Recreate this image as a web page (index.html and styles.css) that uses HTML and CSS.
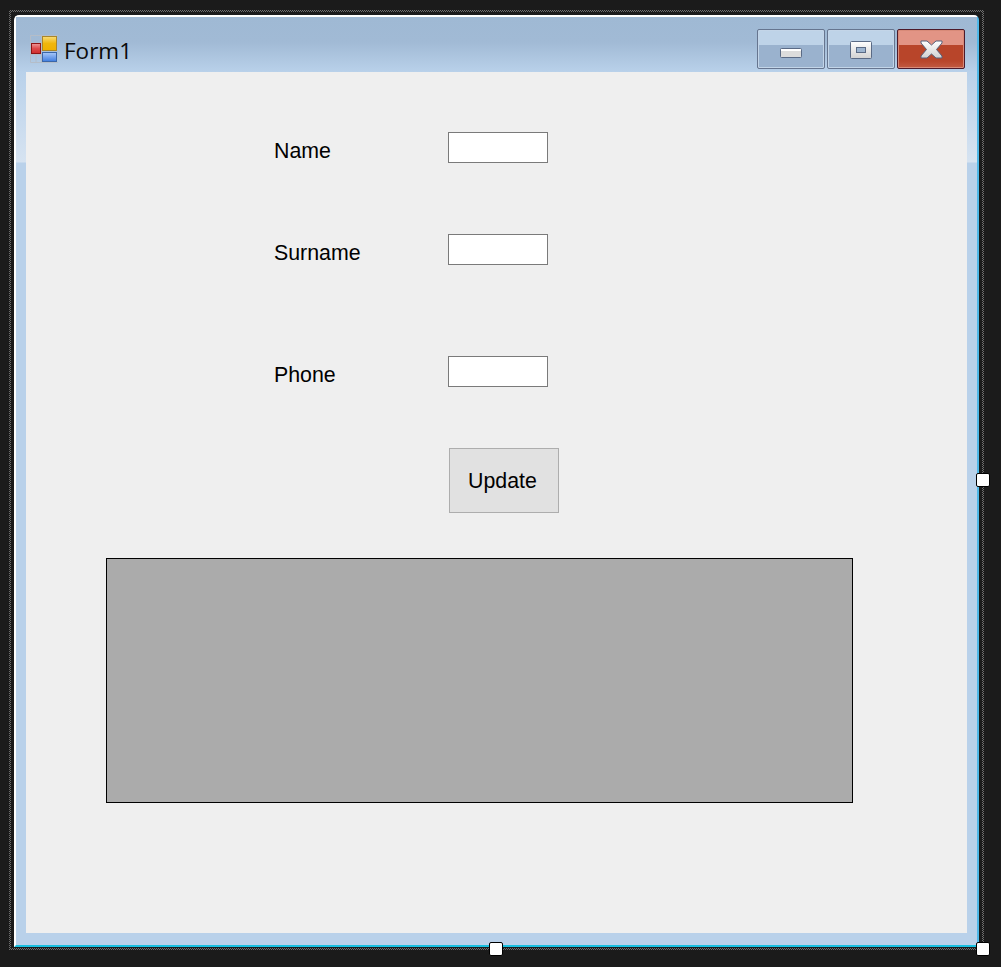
FILE: index.html
```html
<!DOCTYPE html>
<html lang="en">
<head>
<meta charset="utf-8">
<title>Form1</title>
<link rel="stylesheet" href="styles.css">
</head>
<body>
<div class="designer">
  <div class="selection">
    <div class="selection-gap">
      <div class="window">
        <div class="caption">
          <svg class="app-icon" width="29" height="28" viewBox="0 0 29 28">
            <path d="M.5 .5H28M.5 8H12M.5 19.500H12M.5 27.500H28M.5 .5V27.500M6 19.500V27.500M11.500 .5V27.500" fill="none" stroke="#b4bdc8" stroke-width="1"/>
            <defs>
              <linearGradient id="g-red" x1="0" y1="0" x2="0" y2="1"><stop offset="0" stop-color="#ee9a9a"/><stop offset=".5" stop-color="#dd4a4a"/><stop offset="1" stop-color="#d02c2c"/></linearGradient>
              <linearGradient id="g-yellow" x1="0" y1="0" x2="0" y2="1"><stop offset="0" stop-color="#f9dc78"/><stop offset=".5" stop-color="#f0b60c"/><stop offset="1" stop-color="#efb000"/></linearGradient>
              <linearGradient id="g-blue" x1="0" y1="0" x2="0" y2="1"><stop offset="0" stop-color="#a9c8f8"/><stop offset="1" stop-color="#3f7de0"/></linearGradient>
            </defs>
            <rect x="1.500" y="8.500" width="9" height="10" fill="url(#g-red)" stroke="#8f1414"/>
            <rect x="12.500" y="1.500" width="14" height="14" fill="url(#g-yellow)" stroke="#a9862a"/>
            <rect x="12.500" y="17.500" width="14" height="9" fill="url(#g-blue)" stroke="#3a66a8"/>
          </svg>
          <span class="title">Form1</span>
          <div class="caption-buttons">
            <div class="cap-btn">
              <svg width="22" height="10" viewBox="0 0 22 10"><rect x=".5" y=".5" width="21" height="9" rx="1" fill="#dcdcdc" stroke="#5a6a85"/><rect x="1" y="1" width="20" height="2" fill="#fff"/></svg>
            </div>
            <div class="cap-btn">
              <svg class="icon-max" width="22" height="18" viewBox="0 0 22 18"><defs><linearGradient id="g-max" x1="0" y1="0" x2="0" y2="1"><stop offset="0" stop-color="#fff"/><stop offset="1" stop-color="#d2d2d2"/></linearGradient></defs><rect x=".5" y=".5" width="21" height="17" rx="1" fill="url(#g-max)" stroke="#5a6a85"/><rect x="6.500" y="6.500" width="9" height="5" fill="#9db5d0" stroke="#5a6a85"/></svg>
            </div>
            <div class="cap-btn cap-close">
              <svg width="23" height="19" viewBox="0 0 23 19"><defs><linearGradient id="g-x" x1="0" y1="0" x2="0" y2="1"><stop offset="0" stop-color="#fff"/><stop offset="1" stop-color="#d0d0d0"/></linearGradient></defs><path d="M1 1H7L11.500 5 16 1H22V3L16.500 9.500 22 16V18H16L11.500 14 7 18H1V16L6.500 9.500 1 3Z" fill="url(#g-x)" stroke="#56607a"/></svg>
            </div>
          </div>
        </div>
        <div class="body-row">
          <div class="client">
            <div class="field field-name">
              <span class="label">Name</span>
              <div class="textbox"></div>
            </div>
            <div class="field field-surname">
              <span class="label">Surname</span>
              <div class="textbox"></div>
            </div>
            <div class="field field-phone">
              <span class="label">Phone</span>
              <div class="textbox"></div>
            </div>
            <div class="update">Update</div>
            <div class="grid"></div>
          </div>
        </div>
      </div>
    </div>
    <span class="handle handle-right"></span>
    <span class="handle handle-bottom"></span>
    <span class="handle handle-corner"></span>
  </div>
</div>
</body>
</html>
```

FILE: styles.css
```css
* { box-sizing: border-box; }
html, body { margin: 0; height: 100%; }
body {
  background: #1b1b1b;
  font-family: "Liberation Sans", Arial, sans-serif;
  overflow: hidden;
}
.designer { padding: 10px 0 0 9px; }
.selection {
  position: relative;
  width: 975px;
  height: 940px;
  padding: 2px;
  background: repeating-conic-gradient(#6e6e6e 0 25%, #1b1b1b 0 50%) 0 0 / 2px 2px;
}
.selection-gap {
  height: 936px;
  padding: 3px;
  background: #1b1b1b;
}
.window {
  width: 965px;
  height: 932px;
  display: flex;
  flex-direction: column;
  border-top: 2px solid #fff;
  border-left: 2px solid #fff;
  border-right: 2px solid #4fb8e8;
  border-bottom: 2px solid #18c0e0;
  border-top-left-radius: 5px;
  border-top-right-radius: 5px;
  background: linear-gradient(to bottom, #b9d1ea 0 55px, #d6e3f1 145px, #b9d1ea 146px) #b9d1ea;
}
.caption {
  flex: none;
  height: 55px;
  display: flex;
  align-items: flex-start;
  padding: 18px 12px 0 14px;
  background: linear-gradient(to bottom, #9fb9d4 0, #a1bad5 25px, #b9d1ea 55px);
}
.app-icon { flex: none; }
.title {
  margin: 1px 0 0 5px;
  font-family: "Open Sans", sans-serif;
  font-size: 22.500px;
  line-height: 30px;
  color: #0a0a0a;
}
.caption-buttons {
  margin: -6px 0 0 auto;
  display: flex;
  gap: 2px;
}
.cap-btn {
  width: 68px;
  height: 40px;
  padding-top: 18px;
  display: flex;
  justify-content: center;
  align-items: flex-start;
  border: 1px solid #66758f;
  border-radius: 2px;
  box-shadow: inset 0 0 0 1px #c3d5e8;
  background: linear-gradient(to bottom, #bed3e8 0 15px, #9ab2ce 15px 100%);
}
.icon-max { margin-top: -7px; }
.cap-close {
  padding-top: 10px;
  border-color: #4d1a2a;
  box-shadow: inset 0 0 0 1px #d88a78;
  background: linear-gradient(to bottom, #e29485 0 15px, #b8452a 15px 31px, #c25a42 100%);
}
.body-row {
  flex: 1;
  padding: 0 10px 11px;
}
.client {
  height: 861px;
  background: #efefef;
  padding: 60px 0 0 80px;
}
.field {
  display: flex;
  align-items: flex-start;
  padding-left: 168px;
}
.field-surname { margin-top: 70px; }
.field-phone { margin-top: 90px; }
.label {
  width: 174px;
  padding-top: 6px;
  font-size: 21.330px;
  line-height: 26px;
  color: #000;
}
.textbox {
  width: 100px;
  height: 31px;
  background: #fff;
  border: 1px solid #7a7a7a;
}
.update {
  width: 110px;
  height: 65px;
  margin: 60px 0 0 343px;
  padding: 2px 3px 0 0;
  display: flex;
  align-items: center;
  justify-content: center;
  font-size: 21.330px;
  color: #000;
  background: #e1e1e1;
  border: 1px solid #adadad;
}
.grid {
  width: 747px;
  height: 245px;
  margin-top: 45px;
  background: #ababab;
  border: 1px solid #000;
}
.handle {
  position: absolute;
  width: 14px;
  height: 14px;
  background: #fff;
  border: 1px solid #000;
  border-radius: 2px;
}
.handle-right { left: 967px; top: 463px; }
.handle-bottom { left: 480px; top: 932px; }
.handle-corner { left: 967px; top: 932px; }
```
